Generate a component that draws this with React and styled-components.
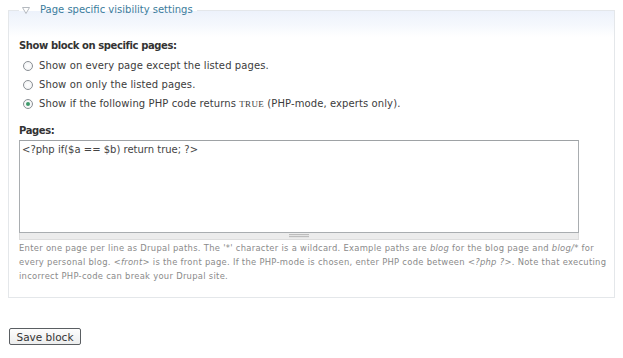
import React from "react";
import styled, { createGlobalStyle } from "styled-components";

const Global = createGlobalStyle`
  html, body { margin: 0; padding: 0; background: #fff; }
  body { font-family: "DejaVu Sans", Verdana, sans-serif; color: #3a3a3a; }
`;

const Page = styled.div`
  padding: 3px 9px 0 8px;
`;

const Fieldset = styled.fieldset`
  margin: 0;
  width: 607px;
  min-width: 0;
  box-sizing: border-box;
  padding: 0 3px 14px 10px;
  border: 1px solid #e4e7ea;
  background: linear-gradient(to bottom, #edf2fb 0px, #f5f8fd 14px, #ffffff 26px);
`;

const Legend = styled.legend`
  padding: 0 4px 0 3px;
  font-size: 10px;
  line-height: 14px;
  color: #3b7c9c;
  display: flex;
  align-items: center;
  gap: 10px;
`;

const Heading = styled.div`
  font-weight: bold;
  font-size: 10px;
  letter-spacing: -0.4px;
  line-height: 14px;
  color: #333;
  margin: ${(p) => p.$top}px 0 ${(p) => p.$bottom}px;
`;

const Options = styled.div`
  display: flex;
  flex-direction: column;
`;

const Option = styled.label`
  display: flex;
  align-items: center;
  height: 19px;
  padding-left: 4px;
  gap: 6px;
  font-size: 10px;
  letter-spacing: 0.1px;
  color: #3c3c3c;
`;

const Radio = styled.input.attrs({ type: "radio" })`
  appearance: none;
  margin: 0;
  width: 10px;
  height: 10px;
  border-radius: 50%;
  border: 1px solid #8a8f94;
  background: radial-gradient(circle, #ffffff 0%, #eef0f2 100%);
  box-sizing: border-box;
  display: grid;
  place-items: center;
  &:checked::after {
    content: "";
    width: 4px;
    height: 4px;
    border-radius: 50%;
    background: #3f9a6c;
  }
`;

const Code = styled.code`
  font-family: "Liberation Serif", serif;
  font-size: 9px;
  letter-spacing: 0.3px;
`;

const Area = styled.div`
  width: 560px;
  display: flex;
  flex-direction: column;
`;

const TextArea = styled.textarea`
  height: 93px;
  box-sizing: border-box;
  margin: 0;
  resize: none;
  border: 1px solid #a9adb0;
  border-top-color: #9ea2a5;
  padding: 2px 2px;
  font-family: "DejaVu Sans", Verdana, sans-serif;
  font-size: 10px;
  line-height: 13px;
  color: #444;
  outline: none;
`;

const Grippie = styled.div`
  height: 7px;
  background: #ececec;
  border: 1px solid #dddddd;
  border-top: 0;
  box-sizing: border-box;
  display: flex;
  justify-content: center;
  align-items: center;
`;

const Handle = styled.div`
  width: 20px;
  height: 4px;
  background: repeating-linear-gradient(to bottom, #bdbdbd 0 1px, #e4e4e4 1px 2px);
`;

const Description = styled.div`
  margin-top: 1px;
  font-size: 8.4px;
  line-height: 14px;
  color: #8a8a8a;
  letter-spacing: 0.29px;
  white-space: nowrap;
  em { font-style: italic; }
`;

const Button = styled.button`
  margin-top: 30px;
  margin-left: 1px;
  width: 72px;
  height: 17px;
  padding: 0;
  font-family: "DejaVu Sans", Verdana, sans-serif;
  font-size: 10.5px;
  color: #333;
  border: 1px solid #5a5e62;
  border-radius: 2px;
  background: linear-gradient(to bottom, #fdfdfd, #eceded);
`;

function Triangle() {
  return (
    <svg width="8" height="7" viewBox="0 0 8 7">
      <path d="M0.5 0.5 H7.5 L4 6.5 Z" fill="#fff" stroke="#b4b9bf" strokeWidth="1" />
    </svg>
  );
}

export default function App() {
  return (
    <>
      <Global />
      <Page>
        <Fieldset>
          <Legend>
            <Triangle />
            <span>Page specific visibility settings</span>
          </Legend>
          <Heading $top={22} $bottom={3}>Show block on specific pages:</Heading>
          <Options>
            <Option>
              <Radio name="vis" />
              Show on every page except the listed pages.
            </Option>
            <Option>
              <Radio name="vis" />
              Show on only the listed pages.
            </Option>
            <Option>
              <Radio name="vis" defaultChecked />
              <span>
                Show if the following PHP code returns <Code>TRUE</Code> (PHP-mode, experts only).
              </span>
            </Option>
          </Options>
          <Heading $top={11} $bottom={2}>Pages:</Heading>
          <Area>
            <TextArea defaultValue={"<?php if($a == $b) return true; ?>"} />
            <Grippie>
              <Handle />
            </Grippie>
          </Area>
          <Description>
            Enter one page per line as Drupal paths. The '*' character is a wildcard. Example paths are{" "}
            <em>blog</em> for the blog page and <em>blog/*</em> for
            <br />
            every personal blog. <em>&lt;front&gt;</em> is the front page. If the PHP-mode is chosen, enter PHP
            code between <em>&lt;?php ?&gt;</em>. Note that executing
            <br />
            incorrect PHP-code can break your Drupal site.
          </Description>
        </Fieldset>
        <Button>Save block</Button>
      </Page>
    </>
  );
}
